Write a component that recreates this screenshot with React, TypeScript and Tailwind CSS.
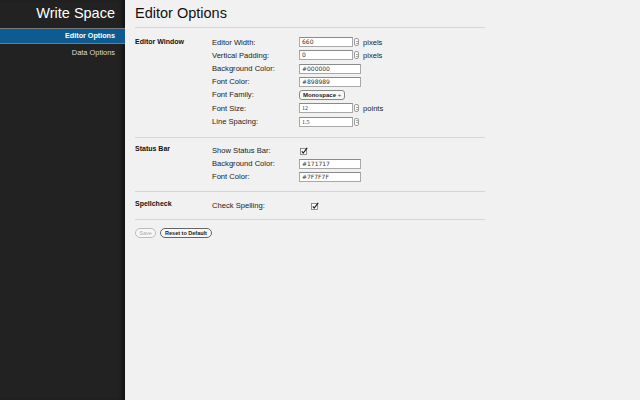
import React from "react";

const font = { fontFamily: '"Liberation Sans", Arial, sans-serif' };

function Spinner() {
  return (
    <div className="ml-[1px] flex h-[8px] w-[5px] flex-col items-center justify-center rounded-[2px] border border-[#999] bg-white">
      <div className="h-0 w-0 border-x-[1.5px] border-b-[1.5px] border-x-transparent border-b-[#555]" />
      <div className="mt-[1px] h-0 w-0 border-x-[1.5px] border-t-[1.5px] border-x-transparent border-t-[#555]" />
    </div>
  );
}

function TextInput({ value, w = 54, serif = false }: { value: string; w?: number; serif?: boolean }) {
  return (
    <div
      className="flex h-[10px] items-center border border-[#a8a8a8] border-t-[#8a8a8a] bg-white pl-[2px] text-[6px] leading-none text-[#333]"
      style={{ width: w, fontFamily: serif ? '"Liberation Serif", serif' : '"DejaVu Sans", sans-serif' }}
    >
      {value}
    </div>
  );
}

function Check() {
  return (
    <svg width="8" height="8" viewBox="0 0 8 8">
      <rect x="0.5" y="1.5" width="6" height="6" fill="#fff" stroke="#777" strokeWidth="0.8" />
      <path d="M1.8 4.4 L3.2 6 L7.2 0.8" fill="none" stroke="#222" strokeWidth="1.2" />
    </svg>
  );
}

function Row({ label, children, h = 13 }: { label: string; children: React.ReactNode; h?: number }) {
  return (
    <div className="flex items-center" style={{ height: h }}>
      <div className="w-[87px] text-[7.6px] text-[#222]">{label}</div>
      <div className="flex items-center">{children}</div>
    </div>
  );
}

function Unit({ t }: { t: string }) {
  return <span className="ml-[4px] text-[7.6px] text-[#222]">{t}</span>;
}

export default function App() {
  return (
    <div className="flex h-[400px] w-[640px] overflow-hidden bg-[#f1f1f1]" style={font}>
      <div className="relative flex w-[125px] shrink-0 flex-col bg-[#222222] shadow-[inset_-4px_0_4px_-2px_rgba(0,0,0,0.6)]">
        <div className="flex h-[28px] items-center justify-end pr-[10px] pb-[1px] text-[14.5px] leading-none text-white">
          Write Space
        </div>
        <div className="flex h-[16px] items-center justify-end border-y border-[#7a7a7a] bg-[#0e5b92] pr-[10px] text-[7.2px] font-bold text-white">
          Editor Options
        </div>
        <div className="flex h-[17px] items-center justify-end pr-[10px] text-[7.4px] text-[#ddd]">
          Data Options
        </div>
      </div>
      <div className="flex flex-col pl-[10px]">
        <div className="w-[350px]">
          <div className="flex h-[27px] items-center text-[14.5px] leading-none text-[#111]">Editor Options</div>
          <div className="h-px bg-[#d6d6d6]" />
          <div className="flex pt-[8px] pb-[9px]">
            <div className="w-[77px] pt-[1px] text-[7px] font-bold text-[#111]">Editor Window</div>
            <div className="flex flex-col">
              <Row label="Editor Width:">
                <TextInput value="660" />
                <Spinner />
                <Unit t="pixels" />
              </Row>
              <Row label="Vertical Padding:">
                <TextInput value="0" />
                <Spinner />
                <Unit t="pixels" />
              </Row>
              <Row label="Background Color:">
                <TextInput value="#000000" w={62} />
              </Row>
              <Row label="Font Color:">
                <TextInput value="#898989" w={62} />
              </Row>
              <Row label="Font Family:" h={14}>
                <div className="flex h-[10px] w-[46px] items-center justify-between rounded-[3px] border border-[#888] bg-[#f8f8f8] px-[3px] text-[6px] font-bold text-[#222]">
                  <span>Monospace</span>
                  <span className="text-[6px]">÷</span>
                </div>
              </Row>
              <Row label="Font Size:">
                <TextInput value="12" serif />
                <Spinner />
                <Unit t="points" />
              </Row>
              <Row label="Line Spacing:">
                <TextInput value="1.5" serif />
                <Spinner />
              </Row>
            </div>
          </div>
          <div className="h-px bg-[#d6d6d6]" />
          <div className="flex pt-[6px] pb-[8px]">
            <div className="w-[77px] text-[7px] font-bold text-[#111]">Status Bar</div>
            <div className="flex flex-col">
              <Row label="Show Status Bar:">
                <div className="pl-[1px]">
                  <Check />
                </div>
              </Row>
              <Row label="Background Color:">
                <TextInput value="#171717" w={62} />
              </Row>
              <Row label="Font Color:">
                <TextInput value="#7F7F7F" w={62} />
              </Row>
            </div>
          </div>
          <div className="h-px bg-[#d6d6d6]" />
          <div className="flex pt-[7px] pb-[7px]">
            <div className="w-[77px] text-[7px] font-bold text-[#111]">Spellcheck</div>
            <div className="flex flex-col">
              <Row label="Check Spelling:">
                <div className="pl-[12px]">
                  <Check />
                </div>
              </Row>
            </div>
          </div>
          <div className="h-px bg-[#d6d6d6]" />
          <div className="flex gap-[4px] pt-[8px]">
            <div className="flex h-[10px] w-[21px] items-center justify-center rounded-full border border-[#bbb] bg-[#f7f7f7] text-[5.5px] text-[#aaa]">
              Save
            </div>
            <div className="flex h-[10px] w-[52px] items-center justify-center rounded-full border border-[#666] bg-[#f7f7f7] text-[5.5px] font-bold text-[#222]">
              Reset to Default
            </div>
          </div>
        </div>
      </div>
    </div>
  );
}
